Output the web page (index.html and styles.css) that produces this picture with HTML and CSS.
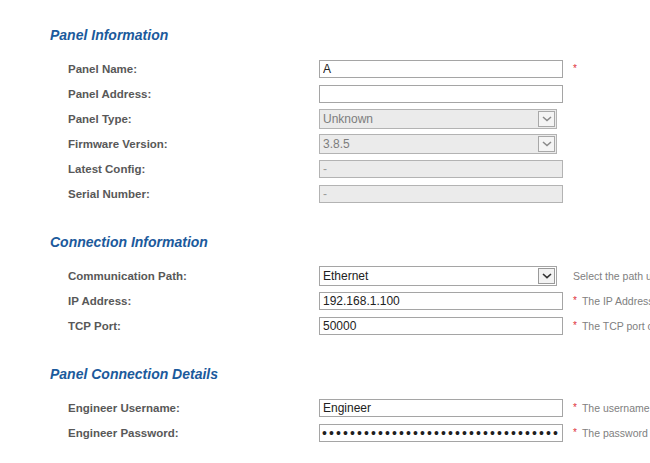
FILE: index.html
```html
<!DOCTYPE html>
<html lang="en">
<head>
<meta charset="utf-8">
<title>Panel Settings</title>
<link rel="stylesheet" href="styles.css">
</head>
<body>
<div class="page">
  <section class="section">
    <h2 class="section-title">Panel Information</h2>
    <div class="row">
      <label class="label">Panel Name:</label>
      <input class="input" type="text" value="A">
      <div class="note"><span class="req">*</span></div>
    </div>
    <div class="row">
      <label class="label">Panel Address:</label>
      <input class="input" type="text" value="">
      <div class="note"></div>
    </div>
    <div class="row">
      <label class="label">Panel Type:</label>
      <div class="select is-disabled">
        <span class="select-value">Unknown</span>
        <span class="select-btn"><svg width="10" height="6" viewBox="0 0 10 6"><path d="M1 1l4 3.6L9 1" fill="none" stroke="currentColor" stroke-width="1.5"/></svg></span>
      </div>
      <div class="note"></div>
    </div>
    <div class="row">
      <label class="label">Firmware Version:</label>
      <div class="select is-disabled">
        <span class="select-value">3.8.5</span>
        <span class="select-btn"><svg width="10" height="6" viewBox="0 0 10 6"><path d="M1 1l4 3.6L9 1" fill="none" stroke="currentColor" stroke-width="1.5"/></svg></span>
      </div>
      <div class="note"></div>
    </div>
    <div class="row">
      <label class="label">Latest Config:</label>
      <input class="input" type="text" value="-" disabled>
      <div class="note"></div>
    </div>
    <div class="row">
      <label class="label">Serial Number:</label>
      <input class="input" type="text" value="-" disabled>
      <div class="note"></div>
    </div>
  </section>

  <section class="section">
    <h2 class="section-title">Connection Information</h2>
    <div class="row">
      <label class="label">Communication Path:</label>
      <div class="select">
        <span class="select-value">Ethernet</span>
        <span class="select-btn"><svg width="10" height="6" viewBox="0 0 10 6"><path d="M1 1l4 3.6L9 1" fill="none" stroke="currentColor" stroke-width="1.6"/></svg></span>
      </div>
      <div class="note"><span class="help">Select the path used to communicate with the panel</span></div>
    </div>
    <div class="row">
      <label class="label">IP Address:</label>
      <input class="input" type="text" value="192.168.1.100">
      <div class="note"><span class="req">*</span><span class="help">The IP Address of the panel</span></div>
    </div>
    <div class="row">
      <label class="label">TCP Port:</label>
      <input class="input" type="text" value="50000">
      <div class="note"><span class="req">*</span><span class="help">The TCP port on the panel</span></div>
    </div>
  </section>

  <section class="section">
    <h2 class="section-title">Panel Connection Details</h2>
    <div class="row">
      <label class="label">Engineer Username:</label>
      <input class="input" type="text" value="Engineer">
      <div class="note"><span class="req">*</span><span class="help">The username of the engineer</span></div>
    </div>
    <div class="row">
      <label class="label">Engineer Password:</label>
      <input class="input input-password" type="password" value="passwordpasswordpasswordpasswordpasswordpassword">
      <div class="note"><span class="req">*</span><span class="help">The password of the engineer</span></div>
    </div>
  </section>
</div>
</body>
</html>
```

FILE: styles.css
```css
html, body {
  margin: 0;
  padding: 0;
  background: #ffffff;
  overflow: hidden;
}

body {
  font-family: "Liberation Sans", Arial, sans-serif;
  width: 650px;
  height: 463px;
}

.page {
  padding: 25px 0 0 50px;
  display: flex;
  flex-direction: column;
  gap: 26px;
}

.section {
  display: flex;
  flex-direction: column;
}

.section-title {
  margin: 0 0 11px 0;
  font-size: 14px;
  line-height: 20px;
  font-weight: bold;
  font-style: italic;
  color: #1b5a9c;
}

.row {
  display: grid;
  grid-template-columns: 251px 244px auto;
  align-items: center;
  height: 25px;
  padding-left: 18px;
  white-space: nowrap;
}

.label {
  font-size: 11.5px;
  font-weight: bold;
  color: #585858;
}

.input {
  box-sizing: border-box;
  width: 244px;
  height: 18px;
  margin: 0;
  padding: 0 3px;
  border: 1px solid #a5a5a5;
  background: #ffffff;
  font-family: "Liberation Sans", Arial, sans-serif;
  font-size: 12px;
  color: #222222;
  outline: none;
}

.input:disabled {
  background: #ebebeb;
  border-color: #b3b3b3;
  color: #9a9a9a;
}

.input-password {
  font-size: 14px;
  letter-spacing: 2.1px;
  color: #1e1e1e;
  padding-left: 2px;
}

.select {
  box-sizing: border-box;
  width: 238px;
  height: 20px;
  display: flex;
  align-items: center;
  justify-content: space-between;
  border: 1px solid #a5a5a5;
  background: #ffffff;
  padding: 0 1px 0 3px;
  font-size: 12px;
  color: #222222;
}

.select.is-disabled {
  background: #ebebeb;
  border-color: #b3b3b3;
  color: #7d7d7d;
}

.select-btn {
  box-sizing: border-box;
  width: 17px;
  height: 16px;
  display: flex;
  align-items: center;
  justify-content: center;
  border: 1px solid #9a9a9a;
  background: #f3f3f3;
  color: #333333;
}

.select.is-disabled .select-btn {
  border-color: #a8a8a8;
  background: #f4f4f4;
  color: #8a8a8a;
}

.note {
  display: flex;
  align-items: center;
  padding-left: 10px;
  font-size: 10.5px;
  color: #808080;
  overflow: hidden;
}

.req {
  color: #e0303a;
  font-size: 10px;
  margin-right: 5px;
}

.help {
  color: #808080;
}
```
